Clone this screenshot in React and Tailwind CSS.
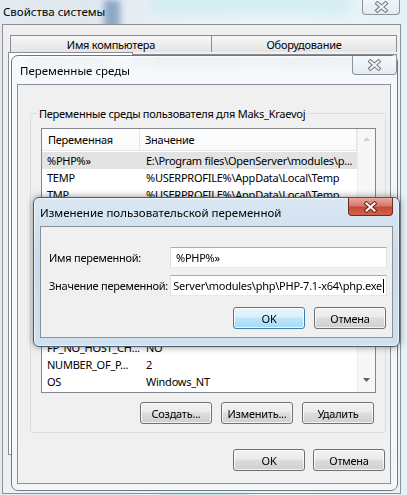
import React from 'react';
import clsx from 'clsx';

const rows = [
  ['%PHP%»', 'E:\\Program files\\OpenServer\\modules\\p...', true],
  ['TEMP', '%USERPROFILE%\\AppData\\Local\\Temp'],
  ['TMP', '%USERPROFILE%\\AppData\\Local\\Temp'],
  ['ComSpec', 'C:\\Windows\\system32\\cmd.exe'],
  ['PATHEXT', '.COM;.EXE;.BAT;.CMD;.VBS'],
  ['PROCESSOR_A...', 'AMD64'],
  ['PSModulePath', 'C:\\Windows\\system32\\Windo...'],
  ['USERNAME', 'SYSTEM'],
  ['windir', 'C:\\Windows'],
  ['Path', 'C:\\Windows\\system32;C:\\Win...'],
  ['PROCESSOR_L...', '6'],
  ['FP_NO_HOST_CH...', 'NO'],
  ['NUMBER_OF_P...', '2'],
  ['OS', 'Windows_NT'],
];

function CloseX({ fg, outline }) {
  return (
    <svg width="15" height="12" viewBox="0 0 15 12">
      <path d="M3.5 2.5 L11.5 9.5 M11.5 2.5 L3.5 9.5" stroke={outline} strokeWidth="4.2" strokeLinecap="square" fill="none" />
      <path d="M3.5 2.5 L11.5 9.5 M11.5 2.5 L3.5 9.5" stroke={fg} strokeWidth="2" strokeLinecap="square" fill="none" />
    </svg>
  );
}

function Btn({ children, primary, className }) {
  return (
    <div
      className={clsx(
        'flex h-[22px] w-[72px] items-center justify-center rounded-[3px] border shadow-[inset_0_0_0_1px_rgba(255,255,255,0.75)]',
        primary
          ? 'border-[#3c7fb1] bg-[linear-gradient(#eaf6fd_0%,#d9f0fc_45%,#bee6fd_50%,#a7d9f5_100%)]'
          : 'border-[#707070] bg-[linear-gradient(#f2f2f2_0%,#ebebeb_45%,#dddddd_50%,#cfcfcf_100%)]',
        className
      )}
    >
      {children}
    </div>
  );
}

function Input({ children, right }) {
  return (
    <div
      className={clsx(
        'flex h-[21px] w-[217px] shrink-0 items-center overflow-hidden whitespace-nowrap border border-[#abadb3] border-x-[#dbdfe6] border-b-[#e3e9ef] bg-white',
        right ? 'justify-end pr-[2px]' : 'pl-[5px]'
      )}
    >
      {children}
    </div>
  );
}

export default function App() {
  return (
    <div className="relative h-[495px] w-[407px] overflow-hidden bg-[linear-gradient(90deg,#e3eaf1_0%,#dfe7ef_22%,#e8f1f6_40%,#eef6f9_70%,#e4f1f6_100%)] text-[11px] leading-[15px] tracking-[-0.25px] text-black [font-family:'Noto_Sans','Open_Sans',sans-serif]">
      {/* glass streaks of the desktop behind */}
      <div className="absolute left-[104px] top-0 h-[30px] w-[16px] bg-[#8ea7c5] blur-[3px]" />
      <div className="absolute left-[150px] top-[-6px] h-[20px] w-[200px] bg-[#d3ecf3] blur-[6px]" />
      <div className="absolute bottom-[-4px] left-[160px] h-[12px] w-[90px] bg-[#bfe4ee] blur-[4px]" />

      {/* Свойства системы */}
      <div className="absolute left-[3px] top-[4px] text-[11.5px] tracking-normal">Свойства системы</div>
      <div className="absolute right-[7px] top-[-4px] flex h-[19px] w-[38px] items-center justify-center rounded-b-[4px] border border-t-0 border-[#8d939a] bg-[linear-gradient(#f4f8fb,#e3ebf2)] pt-[3px]">
        <CloseX fg="#f4f4f4" outline="#7a7f85" />
      </div>

      <div className="absolute left-[2px] top-[24px] h-[470px] w-[399px] border border-[#8e9096] bg-[#f0f0f0]">
        <div className="ml-[7px] mt-[10px] flex h-[17px]">
          <div className="flex w-[202px] items-center justify-center border border-b-0 border-[#898c95] bg-[linear-gradient(#f7f7f7,#e4e4e4)]">
            Имя компьютера
          </div>
          <div className="flex w-[185px] items-center justify-center border border-b-0 border-l-0 border-[#898c95] bg-[linear-gradient(#f7f7f7,#e4e4e4)]">
            Оборудование
          </div>
        </div>
        <div className="ml-[5px] flex h-[16px] text-[#8a8a8a]">
          <div className="flex w-[125px] items-center justify-center border border-b-0 border-[#898c95] bg-white">Дополнительно</div>
          <div className="mt-[2px] flex w-[127px] items-center justify-center border border-b-0 border-l-0 border-[#898c95] bg-[#ececec]">Защита системы</div>
          <div className="mt-[2px] flex w-[137px] items-center justify-center border border-b-0 border-l-0 border-[#898c95] bg-[#ececec]">Удаленный доступ</div>
        </div>
        <div className="ml-[5px] h-[387px] w-[389px] border border-t-0 border-[#898c95] bg-white" />
      </div>

      {/* Переменные среды */}
      <div className="absolute left-[11px] top-[55px] h-[436px] w-[387px] rounded-[7px] border border-[#6d7780] bg-[#f3f8fa]/80 shadow-[inset_0_0_0_1px_rgba(255,255,255,0.6)] backdrop-blur-[4px]">
        <div className="flex h-[28px] items-center pl-[8px] text-[11.5px] tracking-normal">Переменные среды</div>
        <div className="absolute right-[0px] top-[0px] flex h-[19px] w-[45px] items-center justify-center rounded-b-[4px] border border-t-0 border-[#8d939a] bg-[linear-gradient(#f6f9fb,#e4ecf2)]">
          <CloseX fg="#f4f4f4" outline="#7a7f85" />
        </div>

        <div className="ml-[5px] h-[400px] w-[374px] border border-[#8b9098] bg-[#f0f0f0]">
          <div className="relative ml-[12px] mt-[28px] h-[320px] w-[356px] rounded-[3px] border border-[#d5dfe5]">
            <div className="absolute left-[6px] top-[-8px] bg-[#f0f0f0] px-[2px]">
              Переменные среды пользователя для Maks_Kraevoj
            </div>

            <div className="ml-[10px] mt-[14px] flex h-[265px] w-[335px] border border-[#828790] bg-white">
              <div className="flex w-[315px] flex-col">
                <div className="flex h-[22px] border-b border-[#e5e5e5] bg-[linear-gradient(#ffffff,#f7f8f9)]">
                  <div className="flex w-[98px] items-center border-r border-[#e5e5e5] pl-[6px]">Переменная</div>
                  <div className="flex flex-1 items-center border-r border-[#e5e5e5] pl-[5px]">Значение</div>
                </div>
                <div className="mt-[1px] flex flex-col">
                  {rows.map(([n, v, sel], i) => (
                    <div key={i} className={clsx('flex h-[17px] items-center whitespace-nowrap', sel && 'bg-[#e3e3e3]')}>
                      <div className="w-[98px] overflow-hidden pl-[5px]">{n}</div>
                      <div className="flex-1 overflow-hidden pl-[6px]">{v}</div>
                    </div>
                  ))}
                </div>
              </div>
              <div className="flex w-[18px] flex-col justify-between border-l border-[#ececec] bg-[#f7f7f7]">
                <div className="flex h-[20px] items-center justify-center">
                  <svg width="7" height="4" viewBox="0 0 7 4"><path d="M0 4 L3.5 0 L7 4 Z" fill="#d0d0d0" /></svg>
                </div>
                <div className="flex h-[24px] items-center justify-center">
                  <svg width="7" height="4" viewBox="0 0 7 4"><path d="M0 0 L7 0 L3.5 4 Z" fill="#606060" /></svg>
                </div>
              </div>
            </div>

            <div className="mt-[9px] flex justify-end gap-[9px] pr-[11px]">
              <Btn>Создать...</Btn>
              <Btn>Изменить...</Btn>
              <Btn>Удалить</Btn>
            </div>
          </div>

          <div className="mt-[16px] flex justify-end gap-[8px] pr-[5px]">
            <Btn>OK</Btn>
            <Btn>Отмена</Btn>
          </div>
        </div>
      </div>

      {/* Изменение пользовательской переменной */}
      <div className="absolute left-[33px] top-[197px] h-[150px] w-[367px] rounded-[6px] border border-[#4a5a6b] bg-[linear-gradient(#dbe8f4,#c9dbec_40%,#cfe0ef)] shadow-[0_0_7px_rgba(0,0,0,0.45),inset_0_0_0_1px_rgba(255,255,255,0.55)]">
        <div className="flex h-[28px] items-center pl-[6px] text-[11.5px] tracking-normal">Изменение пользовательской переменной</div>
        <div className="absolute right-[6px] top-0 flex h-[18px] w-[45px] items-center justify-center rounded-b-[4px] border border-t-0 border-[#6b2a22] bg-[linear-gradient(#e9a99b_0%,#d9786a_45%,#c74a37_55%,#d0624b_100%)]">
          <CloseX fg="#ffffff" outline="#6e2a22" />
        </div>
        <div className="ml-[6px] h-[112px] w-[353px] border border-[#8b9098] bg-[#f0f0f0] pl-[8px] pt-[20px]">
          <div className="flex items-center">
            <div className="w-[121px] shrink-0 whitespace-nowrap">Имя переменной:</div>
            <Input>%PHP%»</Input>
          </div>
          <div className="mt-[7px] flex items-center">
            <div className="w-[121px] shrink-0 whitespace-nowrap">Значение переменной:</div>
            <Input right>
              <span>Server\modules\php\PHP-7.1-x64\php.exe</span>
              <span className="ml-[1px] h-[14px] w-[1px] bg-black" />
            </Input>
          </div>
          <div className="mt-[11px] flex justify-end gap-[9px] pr-[6px]">
            <Btn primary>OK</Btn>
            <Btn>Отмена</Btn>
          </div>
        </div>
      </div>
    </div>
  );
}
